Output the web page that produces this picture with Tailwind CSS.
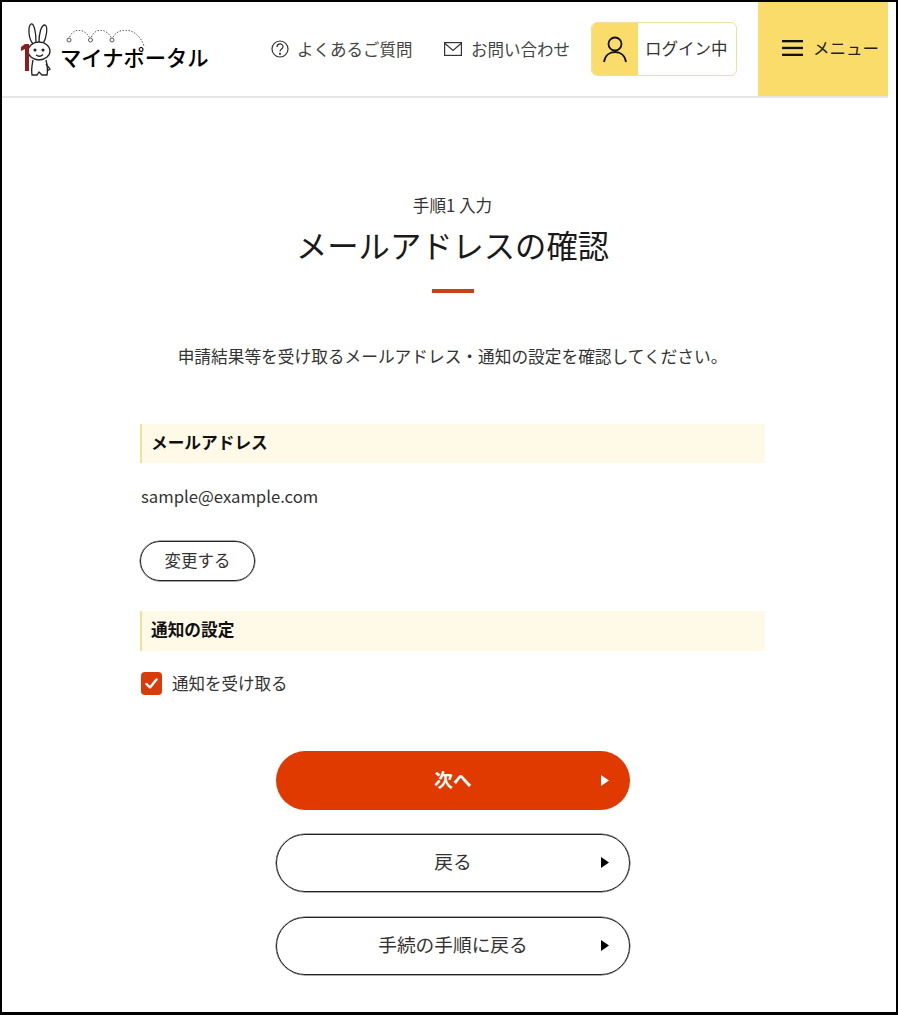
<!DOCTYPE html>
<html lang="ja">
<head>
  <meta charset="UTF-8" />
  <meta name="viewport" content="width=device-width, initial-scale=1" />
  <title>マイナポータル - メールアドレスの確認</title>
  <script src="https://cdn.jsdelivr.net/npm/@tailwindcss/browser@4"></script>
</head>
<body class="bg-white text-[#2b2b2b] font-['Noto_Sans_CJK_JP','Noto_Sans',sans-serif]">
  <div class="w-[898px] h-[1015px] border-2 border-b-[3px] border-black overflow-hidden">

    <!-- Header -->
    <header class="w-[886px] h-[96px] flex items-center border-b-2 border-[#e6e6e6]">
      <div class="w-[250px] h-full flex items-start pl-[17px] pt-[20px] shrink-0">
        <svg class="w-[34px] h-[56px] shrink-0" viewBox="0 0 34 56" fill="none" stroke="#222" stroke-width="1.3">
          <path d="M14 22C9 16 9 4 12 2c3-1 5 8 5 18"/>
          <path d="M20 20c0-8 2-17 6-17 3 1 2 12-2 19"/>
          <ellipse cx="20" cy="29" rx="11" ry="9" fill="#fff"/>
          <circle cx="16" cy="28" r=".9" fill="#222"/>
          <circle cx="24" cy="28" r=".9" fill="#222"/>
          <path d="M17 33c2 1.500 5 1.500 7-.5"/>
          <path d="M14 38c-1 5-2 10-1 15h5l2-3 3 3h5c1-5 0-11-1-15"/>
          <path d="M27 42l4 5-3 2"/>
          <path d="M7 22h4v27H7V27l-4 2v-4z" fill="#8e1c1c" stroke="none" transform="translate(-1 0)"/>
        </svg>
        <div class="relative ml-[7px] mt-[19px]">
          <svg class="absolute left-[5px] top-[-11px] w-[80px] h-[28px]" viewBox="0 0 80 28" fill="none" stroke="#555" stroke-width="1">
            <path d="M4 10C6-3 21-3 25.500 10M25.500 10C28-3 43-3 47 10M47 10C50-3 72-5 79 16" stroke-dasharray="1.500 1.500"/>
            <circle cx="4" cy="10" r="2" fill="#fff"/>
            <circle cx="25.500" cy="10" r="2" fill="#fff"/>
            <circle cx="47" cy="10" r="2" fill="#fff"/>
          </svg>
          <span class="block text-[21.300px] leading-[32px] font-medium text-black whitespace-nowrap">マイナポータル</span>
        </div>
      </div>

      <nav class="flex items-center text-[#444] text-[16.500px]">
        <a href="#" class="flex items-center w-[192px] pl-[19px]">
          <svg class="w-[18px] h-[18px] mr-[8px]" viewBox="0 0 18 18" fill="none" stroke="#333" stroke-width="1.200">
            <circle cx="9" cy="9" r="8"/>
            <path d="M6 7c0-4 6-4 6-.3 0 2.300-3 2.300-3 4.800"/>
            <circle cx="9" cy="13.800" r=".5" fill="#333"/>
          </svg>
          <span class="whitespace-nowrap">よくあるご質問</span>
        </a>
        <a href="#" class="flex items-center w-[147px]">
          <svg class="w-[18px] h-[14px] mr-[9px]" viewBox="0 0 18 14" fill="none" stroke="#333" stroke-width="1.200">
            <rect x=".6" y=".6" width="16.800" height="12.800"/>
            <path d="M1 1.500l8 7 8-7"/>
          </svg>
          <span class="whitespace-nowrap">お問い合わせ</span>
        </a>
      </nav>

      <a href="#" class="flex w-[146px] h-[54px] rounded-[6px] border border-[#f0dfa0] overflow-hidden text-[#333] shrink-0">
        <span class="w-[46px] bg-[#fadc6a] flex items-center justify-center">
          <svg class="w-[24px] h-[28px]" viewBox="0 0 24 28" fill="none" stroke="#111" stroke-width="1.800">
            <circle cx="12" cy="9" r="6.500"/>
            <path d="M1 27c1-7 6-10 11-10s10 3 11 10"/>
          </svg>
        </span>
        <span class="flex-1 flex items-center pl-[7px] pb-[2px] text-[16.500px] whitespace-nowrap">ログイン中</span>
      </a>

      <button class="ml-[21px] w-[130px] h-[96px] mt-[-2px] bg-[#fadc6a] flex items-center pl-[24px] text-[#222] shrink-0">
        <svg class="w-[21px] h-[16px] mr-[10px]" viewBox="0 0 21 16" fill="#111">
          <rect width="21" height="2.300"/>
          <rect y="6.800" width="21" height="2.300"/>
          <rect y="13.700" width="21" height="2.300"/>
        </svg>
        <span class="text-[16.500px] whitespace-nowrap">メニュー</span>
      </button>
    </header>

    <!-- Main -->
    <main class="w-[625px] ml-[138px] pt-[95px]">
      <p class="text-center text-[16.600px] leading-[24px] text-[#333]">手順1 入力</p>
      <h1 class="text-center text-[31.300px] leading-[46px] mt-[5px] text-[#1a1a1a]">メールアドレスの確認</h1>
      <div class="w-[42px] h-[4px] bg-[#c9410f] mx-auto mt-[21px]"></div>
      <p class="text-center text-[16.700px] leading-[24px] mt-[51px] text-[#333] whitespace-nowrap">申請結果等を受け取るメールアドレス・通知の設定を確認してください。</p>

      <h2 class="h-[39px] mt-[56px] pb-[2px] flex items-center pl-[9px] bg-[#fffae8] border-l-2 border-[#f3e19a] font-bold text-[16.700px] text-[#111]">メールアドレス</h2>
      <p class="text-[16.700px] leading-[26px] mt-[20px] text-[#333] pl-[1px]">sample@example.com</p>
      <button class="block w-[115px] h-[40px] mt-[32px] pb-[2px] rounded-full border border-[#222] shadow-[0_0_0_0.5px_#555] text-[16.500px] text-[#333]">変更する</button>

      <h2 class="h-[40px] mt-[30px] pb-[2px] flex items-center pl-[9px] bg-[#fffae8] border-l-2 border-[#f3e19a] font-bold text-[16.700px] text-[#111]">通知の設定</h2>
      <label class="flex items-center mt-[21px] h-[23px] text-[16.500px] text-[#333]">
        <span class="w-[21px] h-[23px] ml-[1px] rounded-[4px] bg-[#d83c0a] flex items-center justify-center">
          <svg class="w-[13px] h-[11px]" viewBox="0 0 13 11" fill="none" stroke="#fff" stroke-width="2.400" stroke-linecap="round" stroke-linejoin="round">
            <path d="M1.500 6l3.500 3.500 6.500-8"/>
          </svg>
        </span>
        <span class="ml-[10px]">通知を受け取る</span>
      </label>

      <!-- Buttons -->
      <div class="w-[354px] ml-[136px] mt-[56px] flex flex-col gap-[24px] text-[18.700px]">
        <a href="#" class="relative h-[59px] pb-[2px] rounded-full bg-[#e03a00] text-white font-bold flex items-center justify-center">次へ
          <svg class="absolute right-[21px] top-[24px] w-[8px] h-[11px]" viewBox="0 0 8 11" fill="#fff"><path d="M0 0l8 5.500L0 11z"/></svg>
        </a>
        <a href="#" class="relative h-[58px] pb-[3px] rounded-full border border-[#222] shadow-[0_0_0_0.5px_#555] text-[#333] flex items-center justify-center">戻る
          <svg class="absolute right-[20px] top-[22px] w-[8px] h-[11px]" viewBox="0 0 8 11" fill="#000"><path d="M0 0l8 5.500L0 11z"/></svg>
        </a>
        <a href="#" class="relative h-[58px] mt-[1px] pb-[3px] rounded-full border border-[#222] shadow-[0_0_0_0.5px_#555] text-[#333] flex items-center justify-center">手続の手順に戻る
          <svg class="absolute right-[20px] top-[22px] w-[8px] h-[11px]" viewBox="0 0 8 11" fill="#000"><path d="M0 0l8 5.500L0 11z"/></svg>
        </a>
      </div>
    </main>
  </div>
</body>
</html>
